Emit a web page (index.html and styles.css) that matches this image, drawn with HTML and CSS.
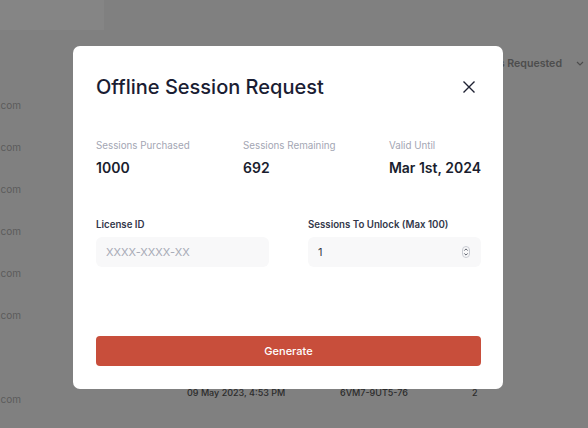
FILE: index.html
```html
<!DOCTYPE html>
<html lang="en">
<head>
    <meta charset="UTF-8">
    <meta name="viewport" content="width=device-width, initial-scale=1.0">
    <title>Offline Session Request</title>
    <link rel="stylesheet" href="styles.css">
</head>
<body>
    <div class="page">
        <div class="topbar">
            <div class="search"></div>
        </div>
        <div class="thead">
            <span>Sessions Requested</span>
            <svg class="chev" width="8" height="5" viewBox="0 0 8 5"><path d="M1 1l3 3 3-3" fill="none" stroke="currentColor" stroke-width="1.2"/></svg>
        </div>
        <div class="row"><div class="email"><span>jenny.wilson@acme.com</span></div><div>12 May 2023, 2:10 PM</div><div>8HQ2-4KD1-03</div><div>5</div></div>
        <div class="row"><div class="email"><span>cody.fisher@acme.com</span></div><div>12 May 2023, 1:02 PM</div><div>2LP9-7XC3-11</div><div>3</div></div>
        <div class="row"><div class="email"><span>esther.howard@acme.com</span></div><div>11 May 2023, 5:41 PM</div><div>5TR1-8MB6-44</div><div>1</div></div>
        <div class="row"><div class="email"><span>kristin.watson@acme.com</span></div><div>11 May 2023, 9:15 AM</div><div>9QW4-2ZN8-27</div><div>4</div></div>
        <div class="row"><div class="email"><span>robert.fox@acme.com</span></div><div>10 May 2023, 3:37 PM</div><div>3JK7-6VB5-90</div><div>2</div></div>
        <div class="row"><div class="email"><span>bessie.cooper@acme.com</span></div><div>10 May 2023, 11:20 AM</div><div>7FG3-1PL2-58</div><div>6</div></div>
        <div class="row"><div class="email"><span></span></div><div>09 May 2023, 6:02 PM</div><div>4NM8-3RT9-15</div><div>1</div></div>
        <div class="row"><div class="email"><span>darlene.robertson@acme.com</span></div><div>09 May 2023, 4:53 PM</div><div>6VM7-9UT5-76</div><div>2</div></div>
    </div>

    <div class="overlay">
        <div class="modal">
            <div class="modal-head">
                <h1 class="modal-title">Offline Session Request</h1>
                <button class="close" aria-label="Close">
                    <svg width="12" height="12" viewBox="0 0 12 12"><path d="M0.5 0.5l11 11M11.5 0.5l-11 11" fill="none" stroke="#1f2233" stroke-width="1.4"/></svg>
                </button>
            </div>

            <div class="stats">
                <div class="stat">
                    <div class="stat-label">Sessions Purchased</div>
                    <div class="stat-value">1000</div>
                </div>
                <div class="stat">
                    <div class="stat-label">Sessions Remaining</div>
                    <div class="stat-value">692</div>
                </div>
                <div class="stat">
                    <div class="stat-label">Valid Until</div>
                    <div class="stat-value">Mar 1st, 2024</div>
                </div>
            </div>

            <div class="fields">
                <div class="field">
                    <label class="field-label">License ID</label>
                    <input class="field-input" type="text" placeholder="XXXX-XXXX-XX">
                </div>
                <div class="field">
                    <label class="field-label">Sessions To Unlock (Max 100)</label>
                    <div class="number-box">
                        <input class="field-input" type="text" value="1">
                        <svg class="spin" width="8" height="12" viewBox="0 0 8 12"><rect x="0.5" y="0.5" width="7" height="11" rx="3.5" fill="none" stroke="#c9ccd3"/><path d="M2.3 4.6L4 2.9l1.7 1.7M2.3 7.4L4 9.1l1.7-1.7" fill="none" stroke="#4b4f5c" stroke-width="0.9"/></svg>
                    </div>
                </div>
            </div>

            <button class="btn-generate">Generate</button>
        </div>
    </div>
</body>
</html>
```

FILE: styles.css
```css
* {
    box-sizing: border-box;
}

body {
    margin: 0;
    overflow: hidden;
    background: #f6f6f6;
    font-family: Inter, "Liberation Sans", sans-serif;
}

.page {
    height: 428px;
}

.topbar {
    height: 30px;
}

.search {
    width: 104px;
    height: 30px;
    background: #ffffff;
}

.thead {
    height: 47px;
    padding-top: 20px;
    padding-right: 4px;
    display: flex;
    justify-content: flex-end;
    align-items: center;
    gap: 14px;
    font-size: 10.6px;
    font-weight: 600;
    color: #949494;
}

.chev {
    color: #949494;
}

.row {
    height: 42px;
    display: grid;
    grid-template-columns: 187px 153px 132px auto;
    align-items: center;
    font-size: 9px;
    font-weight: 500;
    color: #555555;
}

.email {
    width: 21px;
    display: flex;
    justify-content: flex-end;
    overflow: hidden;
    margin-top: 14px;
    font-size: 10px;
    font-weight: 400;
    color: #b0b0b0;
}

.email span {
    white-space: nowrap;
}

.overlay {
    position: fixed;
    inset: 0;
    background: rgba(0, 0, 0, 0.48);
    display: flex;
    align-items: flex-start;
    padding: 46px 0 0 73px;
}

.modal {
    width: 430px;
    height: 343px;
    background: #ffffff;
    border-radius: 7px;
    padding: 23px 22px 23px 23px;
    display: flex;
    flex-direction: column;
}

.modal-head {
    display: flex;
    justify-content: space-between;
    align-items: center;
    height: 36px;
}

.modal-title {
    margin: 0;
    font-size: 20px;
    font-weight: 500;
    color: #1a1d33;
}

.close {
    width: 24px;
    height: 24px;
    border: none;
    background: none;
    padding: 0;
    display: flex;
    align-items: center;
    justify-content: center;
}

.stats {
    margin-top: 33px;
    display: flex;
    justify-content: space-between;
}

.stat-label {
    font-size: 9.8px;
    line-height: 16px;
    color: #a3a6b3;
}

.stat-value {
    margin-top: 4px;
    font-size: 14px;
    line-height: 20px;
    font-weight: 600;
    color: #1a1d2e;
}

.fields {
    margin-top: 39px;
    display: grid;
    grid-template-columns: 173px 173px;
    justify-content: space-between;
}

.field-label {
    display: block;
    font-size: 9.7px;
    line-height: 16px;
    font-weight: 600;
    color: #33374a;
}

.field-input {
    margin-top: 4px;
    width: 100%;
    height: 30px;
    border: none;
    border-radius: 6px;
    background: #f8f8f9;
    padding: 0 9px 0 10px;
    font-family: inherit;
    font-size: 11px;
    color: #373a48;
    outline: none;
}

.field-input::placeholder {
    color: #a7aab6;
}

.number-box {
    position: relative;
}

.spin {
    position: absolute;
    right: 11px;
    top: 13px;
}

.btn-generate {
    margin-top: 69px;
    height: 30px;
    border: none;
    border-radius: 4px;
    background: #c84e3b;
    color: #ffffff;
    font-family: inherit;
    font-size: 11px;
    font-weight: 500;
}
```
